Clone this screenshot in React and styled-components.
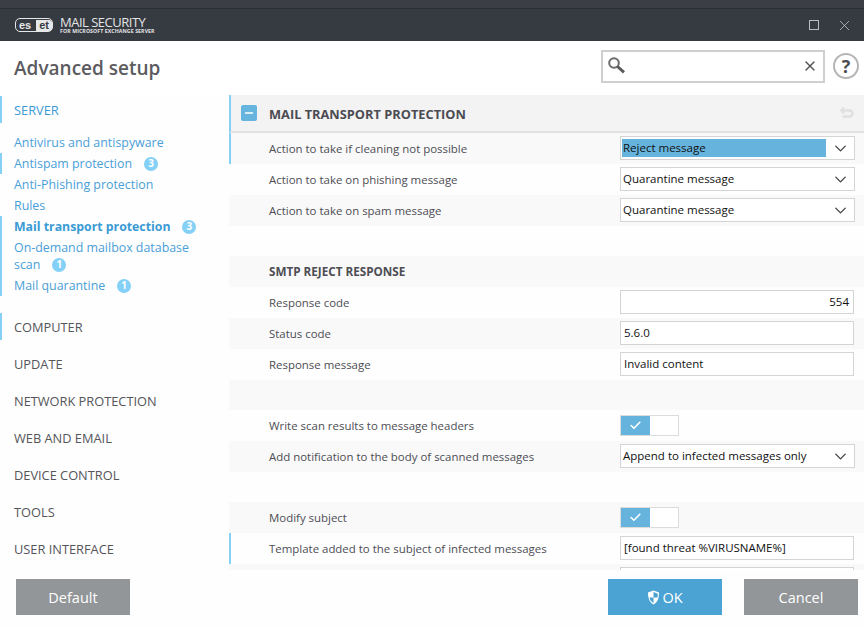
import styled, { createGlobalStyle } from "styled-components";
import { Check, ChevronDown, Minus, X } from "lucide-react";

const GlobalStyle = createGlobalStyle`
  html, body {
    margin: 0;
    padding: 0;
    background: #fff;
  }
  * {
    box-sizing: border-box;
  }
`;

const sideGroups = ["COMPUTER", "UPDATE", "NETWORK PROTECTION", "WEB AND EMAIL", "DEVICE CONTROL", "TOOLS", "USER INTERFACE"];

const Arrow = () => <ChevronDown size={19} strokeWidth={1.7} color="#444" />;

const App = () => {
  return (
    <Window>
      <GlobalStyle />
      <TitleBar>
        <TopStrip />
        <TitleRow>
          <Logo>
            <LogoPill>es<LogoEnd>et</LogoEnd></LogoPill>
            <LogoText>
              <ProductName>MAIL SECURITY</ProductName>
              <ProductSub>FOR MICROSOFT EXCHANGE SERVER</ProductSub>
            </LogoText>
          </Logo>
          <WindowButtons>
            <MaxIcon />
            <X size={17} strokeWidth={1.2} color="#b9bcc0" />
          </WindowButtons>
        </TitleRow>
      </TitleBar>

      <Header>
        <PageTitle>Advanced setup</PageTitle>
        <SearchBox>
          <svg width="20" height="20" viewBox="0 0 20 20">
            <circle cx="7" cy="7" r="4.800" fill="none" stroke="#6a6a6a" strokeWidth="2" />
            <path d="M10.500 10.500l6.500 5.800" stroke="#5a5a5a" strokeWidth="3" />
          </svg>
          <X size={16} strokeWidth={2.2} color="#555" />
        </SearchBox>
        <HelpButton>?</HelpButton>
      </Header>

      <Body>
        <Sidebar>
          <SideGroup $active $marked>SERVER</SideGroup>
          <SideItems>
            <SideItem>Antivirus and antispyware</SideItem>
            <SideItem $marked>Antispam protection<Badge>3</Badge></SideItem>
            <SideItem>Anti-Phishing protection</SideItem>
            <SideItem>Rules</SideItem>
            <SideItem $marked $current>Mail transport protection<Badge>3</Badge></SideItem>
            <SideItem $marked>On-demand mailbox database<br />scan<Badge>1</Badge></SideItem>
            <SideItem $marked>Mail quarantine<Badge>1</Badge></SideItem>
          </SideItems>
          {sideGroups.map((g, i) => (
            <SideGroup key={g} $marked={i === 0}>{g}</SideGroup>
          ))}
        </Sidebar>

        <Panel>
          <PanelHeader>
            <Collapse><Minus size={12} strokeWidth={3} color="#fff" /></Collapse>
            <PanelTitle>MAIL TRANSPORT PROTECTION</PanelTitle>
            <svg width="15" height="14" viewBox="0 0 15 14">
              <path d="M5 1.500L2 4.500 5 7.500" fill="#e0e0e0" stroke="#e0e0e0" strokeWidth="2" />
              <path d="M3 4.500h7.500a3 3 0 0 1 0 6H3.500" fill="none" stroke="#e0e0e0" strokeWidth="2.600" />
            </svg>
          </PanelHeader>

          <Row $shade $marked>
            <Label>Action to take if cleaning not possible</Label>
            <Select><Selected>Reject message</Selected><Arrow /></Select>
          </Row>
          <Row>
            <Label>Action to take on phishing message</Label>
            <Select><SelectText>Quarantine message</SelectText><Arrow /></Select>
          </Row>
          <Row $shade>
            <Label>Action to take on spam message</Label>
            <Select><SelectText>Quarantine message</SelectText><Arrow /></Select>
          </Row>
          <Row $short />
          <Row $shade>
            <RowHeading>SMTP REJECT RESPONSE</RowHeading>
          </Row>
          <Row>
            <Label>Response code</Label>
            <Input $right>554</Input>
          </Row>
          <Row $shade>
            <Label>Status code</Label>
            <Input>5.6.0</Input>
          </Row>
          <Row>
            <Label>Response message</Label>
            <Input>Invalid content</Input>
          </Row>
          <Row $short $shade />
          <Row>
            <Label>Write scan results to message headers</Label>
            <Toggle><ToggleOn><Check size={13} strokeWidth={3} color="#fff" /></ToggleOn></Toggle>
          </Row>
          <Row $shade>
            <Label>Add notification to the body of scanned messages</Label>
            <Select><SelectText>Append to infected messages only</SelectText><Arrow /></Select>
          </Row>
          <Row $short />
          <Row $shade>
            <Label>Modify subject</Label>
            <Toggle><ToggleOn><Check size={13} strokeWidth={3} color="#fff" /></ToggleOn></Toggle>
          </Row>
          <Row $marked>
            <Label>Template added to the subject of infected messages</Label>
            <Input>[found threat %VIRUSNAME%]</Input>
          </Row>
          <Row $shade>
            <Label />
            <Input />
          </Row>
        </Panel>
      </Body>

      <Footer>
        <FooterButton>Default</FooterButton>
        <FooterRight>
          <FooterButton $primary>
            <svg width="13" height="15" viewBox="0 0 13 15">
              <path d="M6.500 0.500L12 2.500c0 5-1 9.500-5.500 12C2 12 1 7.500 1 2.500z" fill="#fff" />
              <path d="M6.500 2v5.500H2.500c.2 1 .5 2 1 2.800.7 1 1.700 1.900 3 2.700V7.500h4c.2-1 .3-2 .3-3.800z" fill="#4ba3d3" />
            </svg>
            OK
          </FooterButton>
          <FooterButton>Cancel</FooterButton>
        </FooterRight>
      </Footer>
    </Window>
  );
};

const Window = styled.div`
  width: 864px;
  height: 626px;
  display: flex;
  flex-direction: column;
  overflow: hidden;
  background: #fefefe;
  font-family: "Open Sans", "Noto Sans", sans-serif;
`;

const TitleBar = styled.div`
  height: 41px;
  background: #363a41;
  flex: none;
`;

const TopStrip = styled.div`
  height: 9px;
  background: #3b3f45;
  border-bottom: 1px solid #2b2e33;
`;

const TitleRow = styled.div`
  height: 32px;
  display: flex;
  align-items: center;
  justify-content: space-between;
  padding: 0 11px 0 15px;
`;

const Logo = styled.div`
  display: flex;
  align-items: center;
  gap: 7px;
`;

const LogoPill = styled.div`
  width: 38px;
  height: 14px;
  border: 1.5px solid #e6e7e8;
  border-radius: 5px;
  display: flex;
  align-items: center;
  justify-content: space-between;
  padding-left: 3px;
  color: #e6e7e8;
  font-family: "Liberation Sans", sans-serif;
  font-size: 11px;
  font-weight: 700;
  line-height: 11px;
`;

const LogoEnd = styled.span`
  background: #e6e7e8;
  color: #363a41;
  height: 11px;
  padding: 0 3px 0 3px;
  border-radius: 0 3px 3px 0;
`;

const LogoText = styled.div`
  display: flex;
  flex-direction: column;
  gap: 1px;
  color: #e4e5e6;
`;

const ProductName = styled.div`
  font-size: 13px;
  line-height: 12px;
  letter-spacing: -0.5px;
`;

const ProductSub = styled.div`
  font-size: 5.2px;
  font-weight: 700;
  line-height: 5px;
  letter-spacing: 0.1px;
  white-space: nowrap;
`;

const WindowButtons = styled.div`
  display: flex;
  align-items: center;
  gap: 17px;
`;

const MaxIcon = styled.div`
  width: 10px;
  height: 10px;
  border: 1px solid #b9bcc0;
`;

const Header = styled.div`
  height: 54px;
  flex: none;
  display: flex;
  align-items: center;
  padding: 0 5px 0 14px;
  background: #fff;
`;

const PageTitle = styled.h1`
  margin: 0 auto 0 0;
  font-size: 19px;
  font-weight: 600;
  color: #5b5b60;
`;

const SearchBox = styled.div`
  width: 224px;
  height: 33px;
  margin: 0 8px 4px 0;
  border: 2px solid #cfcfcf;
  display: flex;
  align-items: center;
  justify-content: space-between;
  padding: 0 5px 0 4px;
`;

const HelpButton = styled.div`
  width: 26px;
  height: 26px;
  margin-bottom: 4px;
  border: 2px solid #b5b5b5;
  border-radius: 50%;
  display: flex;
  align-items: center;
  justify-content: center;
  font-size: 18px;
  font-weight: 700;
  color: #4c4c50;
`;

const Body = styled.div`
  flex: 1;
  min-height: 0;
  display: flex;
  overflow: hidden;
`;

const Sidebar = styled.nav`
  width: 229px;
  flex: none;
  padding-top: 1px;
`;

const SideGroup = styled.div`
  height: 27px;
  margin-bottom: 10px;
  display: flex;
  align-items: center;
  padding: 1px 0 0 12px;
  border-left: 2px solid ${(p) => (p.$marked ? "#86d0f5" : "transparent")};
  font-size: 12.8px;
  color: ${(p) => (p.$active ? "#3a9bd5" : "#55555a")};
`;

const SideItems = styled.div`
  margin: -1px 0 17px;
`;

const SideItem = styled.div`
  padding: 2px 10px 2px 12px;
  line-height: 17px;
  border-left: 2px solid ${(p) => (p.$marked ? "#86d0f5" : "transparent")};
  font-size: ${(p) => (p.$current ? "12.3px" : "12.4px")};
  font-weight: ${(p) => (p.$current ? 700 : 400)};
  color: ${(p) => (p.$current ? "#3a9bd5" : "#4a9fd8")};
`;

const Badge = styled.span`
  display: inline-flex;
  align-items: center;
  justify-content: center;
  width: 14px;
  height: 14px;
  margin-left: 12px;
  border-radius: 50%;
  background: #85d0f6;
  color: #fff;
  font-size: 10px;
  font-weight: 700;
  vertical-align: 1px;
`;

const Panel = styled.main`
  flex: 1;
  min-width: 0;
`;

const PanelHeader = styled.div`
  height: 38px;
  display: flex;
  align-items: center;
  padding: 0 10px 0 10px;
  background: #f3f3f3;
  border-left: 2px solid #86d0f5;
  border-bottom: 2px solid #e2e2e2;
`;

const Collapse = styled.div`
  width: 16px;
  height: 16px;
  border-radius: 2px;
  background: #65b5de;
  display: flex;
  align-items: center;
  justify-content: center;
`;

const PanelTitle = styled.h2`
  flex: 1;
  margin: 2px 0 0 12px;
  font-size: 12.8px;
  font-weight: 700;
  color: #4b4b52;
`;

const Row = styled.div`
  height: ${(p) => (p.$short ? "30px" : "31px")};
  display: flex;
  align-items: center;
  padding: 0 0 1px 40px;
  background: ${(p) => (p.$shade ? "#f9f9f9" : "#fefefe")};
  box-shadow: ${(p) => (p.$marked ? "inset 2px 0 0 #86d0f5" : "none")};
`;

const Label = styled.div`
  width: 351px;
  flex: none;
  font-size: 11.45px;
  color: #4d4d54;
`;

const RowHeading = styled(Label)`
  font-size: 11.7px;
  font-weight: 700;
`;

const Select = styled.div`
  width: 235px;
  height: 24px;
  display: flex;
  align-items: center;
  padding: 0 4px 0 1px;
  background: #fff;
  border: 1px solid #d4d4d4;
`;

const SelectText = styled.div`
  flex: 1;
  padding: 0 0 1px 1px;
  font-size: 11.5px;
  color: #111;
`;

const Selected = styled(SelectText)`
  height: 18px;
  line-height: 17px;
  padding-bottom: 0;
  margin-right: 5px;
  background: #66b4dd;
`;

const Input = styled.div`
  width: 234px;
  height: 24px;
  line-height: 22px;
  padding: 0 4px 0 3px;
  background: #fff;
  border: 1px solid #d4d4d4;
  font-size: 11.5px;
  color: #111;
  text-align: ${(p) => (p.$right ? "right" : "left")};
`;

const Toggle = styled.div`
  width: 59px;
  height: 21px;
  margin-top: 1px;
  background: #fff;
  border: 1px solid #dcdcdc;
`;

const ToggleOn = styled.div`
  width: 29px;
  height: 19px;
  background: #66b4dd;
  display: flex;
  align-items: center;
  justify-content: center;
`;

const Footer = styled.div`
  height: 56px;
  flex: none;
  display: flex;
  justify-content: space-between;
  padding: 9px 6px 11px 16px;
  background: #fefefe;
`;

const FooterRight = styled.div`
  display: flex;
  gap: 22px;
`;

const FooterButton = styled.div`
  width: 114px;
  height: 36px;
  display: flex;
  align-items: center;
  justify-content: center;
  gap: 2px;
  background: ${(p) => (p.$primary ? "#4ba3d3" : "#929699")};
  color: #fff;
  font-size: 14.5px;
`;

export default App;
